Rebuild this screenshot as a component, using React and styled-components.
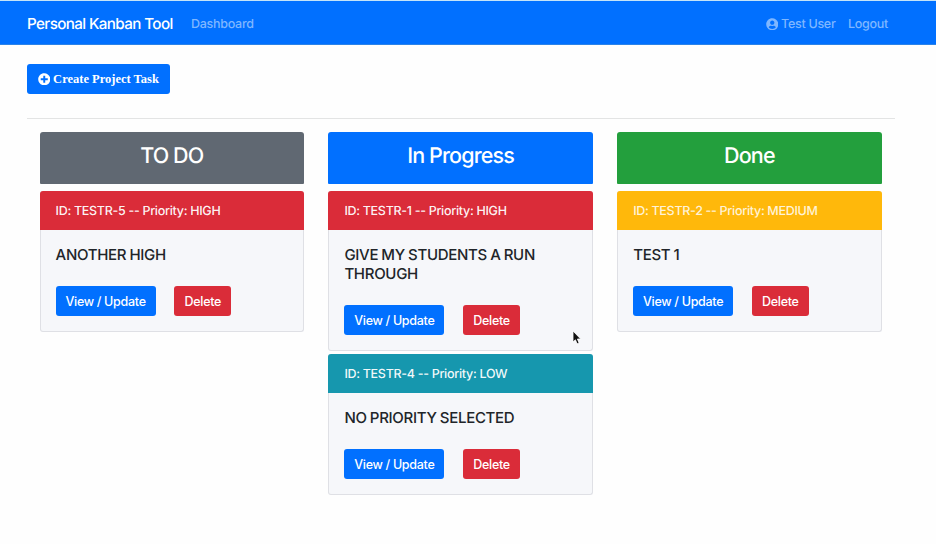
import React from 'react';
import styled, { createGlobalStyle } from 'styled-components';
import { FaPlusCircle, FaUserCircle } from 'react-icons/fa';

const colors = {
  blue: '#0170ff',
  red: '#da2c39',
  teal: '#1697ae',
  amber: '#ffb80b',
  green: '#239f3d',
  gray: '#606872',
};

const GlobalStyle = createGlobalStyle`
  *, *::before, *::after { box-sizing: border-box; }
  body {
    margin: 0;
    background: #fefefe;
    color: #212529;
    font: 450 12.5px/19px Inter, sans-serif;
    letter-spacing: -0.28px;
    word-spacing: -0.1px;
    text-rendering: geometricPrecision;
    overflow: hidden;
  }
`;

const Page = styled.div`
  position: relative;
  min-height: 544px;
`;

const Navbar = styled.nav`
  display: flex;
  align-items: center;
  height: 45px;
  padding: 2px 48px 0 27px;
  border-top: 1px solid #c5e4f8;
  border-bottom: 1px solid #2c83e8;
  background: ${colors.blue};
`;

const Brand = styled.a`
  width: 145.5px;
  margin-right: 18.5px;
  color: #fff;
  font-size: 15.2px;
  line-height: 20px;
  letter-spacing: -0.6px;
  white-space: nowrap;
`;

const NavLink = styled.a`
  display: flex;
  align-items: center;
  gap: 3px;
  padding-top: 1px;
  color: #7fb7ff;
`;

const UserMenu = styled.div`
  display: flex;
  gap: 12.5px;
  margin-left: auto;
`;

const Container = styled.main`
  width: 868px;
  margin-left: 27px;
  padding-top: 19px;
`;

const Button = styled.button`
  display: inline-flex;
  align-items: center;
  justify-content: center;
  width: ${(p) => p.$width}px;
  height: 30px;
  padding: 1px 0 0;
  border: 0;
  border-radius: 3px;
  background: ${(p) => p.$color};
  color: #fff;
  font: inherit;
  letter-spacing: inherit;
  word-spacing: inherit;
`;

const CreateButton = styled(Button)`
  gap: 3px;
  padding: 0;
  font: 700 12.5px/18px "Liberation Serif", serif;
  letter-spacing: 0;
  word-spacing: 0;
`;

const Divider = styled.hr`
  height: 1px;
  margin: 24px 0 13px;
  border: 0;
  background: #e3e4e4;
`;

const Board = styled.div`
  display: grid;
  grid-template-columns: repeat(3, 264.4px);
  gap: 24.4px;
  padding-left: 12.6px;
`;

const Column = styled.section`
  display: flex;
  flex-direction: column;
  gap: 3.4px;
`;

const ColumnHeader = styled.header`
  height: 52px;
  margin-bottom: 3.6px;
  padding-top: 11px;
  border-radius: 3px 3px 1px 1px;
  background: ${(p) => p.$color};
  text-align: center;
`;

const ColumnTitle = styled.h3`
  margin: 0;
  color: #fff;
  font-size: 21.5px;
  font-weight: 500;
  line-height: 26px;
  letter-spacing: -0.85px;
`;

const Card = styled.article`
  border: 1px solid #dfe0e5;
  border-top: 0;
  border-radius: 3px;
  background: #f6f7fa;
`;

const CardHeader = styled.div`
  height: 39px;
  margin: 0 -1px;
  padding: 11px 16px 9px;
  border-radius: 3px 3px 0 0;
  background: ${(p) => p.$color};
  color: rgba(255, 255, 255, ${(p) => p.$opacity});
`;

const CardBody = styled.div`
  padding: 15px;
`;

const CardTitle = styled.h5`
  margin: 0 0 22px;
  font-size: 15px;
  font-weight: 500;
  line-height: 19px;
  letter-spacing: -0.3px;
  word-spacing: -0.5px;
`;

const Actions = styled.div`
  display: flex;
  gap: 18.7px;
`;

const Pointer = styled.svg`
  position: absolute;
  left: 572px;
  top: 330px;
`;

const columns = [
  {
    title: 'TO DO',
    color: colors.gray,
    tasks: [{ id: 'TESTR-5', priority: 'HIGH', summary: 'ANOTHER HIGH' }],
  },
  {
    title: 'In Progress',
    color: colors.blue,
    tasks: [
      { id: 'TESTR-1', priority: 'HIGH', summary: 'GIVE MY STUDENTS A RUN THROUGH' },
      { id: 'TESTR-4', priority: 'LOW', summary: 'NO PRIORITY SELECTED' },
    ],
  },
  {
    title: 'Done',
    color: colors.green,
    tasks: [{ id: 'TESTR-2', priority: 'MEDIUM', summary: 'TEST 1' }],
  },
];

const priorityColors = { HIGH: colors.red, MEDIUM: colors.amber, LOW: colors.teal };

function TaskCard({ id, priority, summary }) {
  return (
    <Card>
      <CardHeader $color={priorityColors[priority]} $opacity={priority === 'MEDIUM' ? 0.85 : 0.96}>
        {`ID: ${id} -- Priority: ${priority}`}
      </CardHeader>
      <CardBody>
        <CardTitle>{summary}</CardTitle>
        <Actions>
          <Button $color={colors.blue} $width={100}>View / Update</Button>
          <Button $color={colors.red} $width={57}>Delete</Button>
        </Actions>
      </CardBody>
    </Card>
  );
}

export default function App() {
  return (
    <Page>
      <GlobalStyle />
      <Navbar>
        <Brand>Personal Kanban Tool</Brand>
        <NavLink>Dashboard</NavLink>
        <UserMenu>
          <NavLink><FaUserCircle size={12.5} />Test User</NavLink>
          <NavLink>Logout</NavLink>
        </UserMenu>
      </Navbar>
      <Container>
        <CreateButton $color={colors.blue} $width={142.5}>
          <FaPlusCircle size={12.5} />Create Project Task
        </CreateButton>
        <Divider />
        <Board>
          {columns.map((column) => (
            <Column key={column.title}>
              <ColumnHeader $color={column.color}>
                <ColumnTitle>{column.title}</ColumnTitle>
              </ColumnHeader>
              {column.tasks.map((task) => <TaskCard key={task.id} {...task} />)}
            </Column>
          ))}
        </Board>
      </Container>
      <Pointer width="10" height="16" viewBox="0 0 10 16">
        <path d="M1 1v11l2.4-2.2 1.7 4 2-.9-1.7-3.9h3.3z" fill="#111" stroke="#fff" strokeWidth=".8" />
      </Pointer>
    </Page>
  );
}
